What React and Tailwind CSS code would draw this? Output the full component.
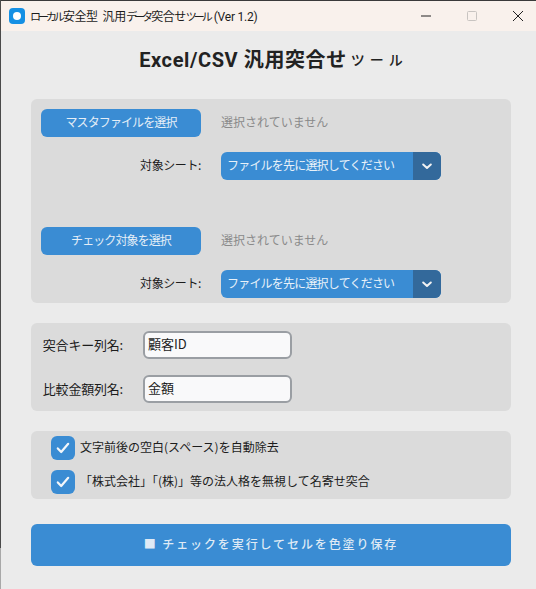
const cjk = "font-['Noto_Sans_CJK_JP','Noto_Sans',sans-serif]";

function Chevron() {
  return (
    <svg width="10" height="7" viewBox="0 0 10 7" fill="none">
      <path d="M1.2 1.5 5 5 8.8 1.5" stroke="#f2f2f2" strokeWidth="2" strokeLinecap="round" strokeLinejoin="round" />
    </svg>
  );
}

function FileRow({ label }) {
  return (
    <div className="flex flex-col gap-[15px]">
      <div className="flex items-center">
        <button className="w-40 h-7 pb-[2px] rounded-md bg-[#3a8cd3] text-xs tracking-[-0.9px] text-[#e4eef7] flex items-center justify-center">{label}</button>
        <span className="ml-5 pb-[2px] text-xs text-[#8a8a8a]">選択されていません</span>
      </div>
      <div className="flex items-center">
        <span className="w-40 pb-[2px] text-right text-xs tracking-[-0.4px] text-[#1c1c1c]">対象シート:</span>
        <div className="ml-5 w-[220px] h-7 rounded-md bg-[#3a8cd3] flex overflow-hidden">
          <span className="flex-1 pl-[6px] text-xs tracking-[-0.8px] leading-[26px] text-[#e8f1f9] whitespace-nowrap">ファイルを先に選択してください</span>
          <span className="w-7 h-7 bg-[#33699b] flex items-center justify-center"><Chevron /></span>
        </div>
      </div>
    </div>
  );
}

function Field({ label, value }) {
  return (
    <div className="flex items-center">
      <span className="w-[92px] pb-px text-right text-[13px] tracking-[-0.2px] text-[#1c1c1c] whitespace-nowrap">{label}</span>
      <div className="ml-5 w-[149px] h-7 rounded-md border-2 border-[#9a9ea3] bg-[#f9f9fa] px-[3px] text-[13px] leading-[22px] text-[#1c1c1c]">{value}</div>
    </div>
  );
}

function Check({ label }) {
  return (
    <div className="flex items-center">
      <span className="w-6 h-6 rounded-md bg-[#3a8cd3] flex items-center justify-center">
        <svg width="14" height="12" viewBox="0 0 14 12" fill="none">
          <path d="M1.8 6.4 5.2 10 12.2 1.8" stroke="#f2f6fa" strokeWidth="2.2" strokeLinecap="round" strokeLinejoin="round" />
        </svg>
      </span>
      <span className="ml-[5px] pb-[2px] text-xs text-[#1c1c1c] whitespace-nowrap">{label}</span>
    </div>
  );
}

export default function App() {
  return (
    <div className={`relative w-[536px] h-[589px] overflow-hidden bg-[#ebebeb] ${cjk}`}>
      <div className="absolute left-0 top-0 w-px h-[548px] bg-[#4a4a4a]" />
      <div className="absolute left-0 top-[548px] w-px h-[41px] bg-[#a8a8a8]" />
      <div className="h-[31px] bg-[#f9f1ec] flex items-center border-t border-[#3a3a3a]">
        <span className="ml-[9px] w-4 h-4 rounded bg-[#1590e4] flex items-center justify-center">
          <span className="w-2 h-2 rounded-sm bg-white" />
        </span>
        <span className="ml-[5px] text-xs text-[#1c1c1c] whitespace-nowrap">
          <span className="text-[11px] tracking-[-3px]">ローカル</span>
          <span className="ml-[1px] tracking-[-0.5px]">安全型</span>
          <span className="ml-[5px] tracking-[-0.2px]">汎用</span>
          <span className="text-[11px] tracking-[-3px]">データ</span>
          <span className="ml-[1px] tracking-[-0.5px]">突合せ</span>
          <span className="text-[11px] tracking-[-3px]">ツール</span>
          <span className="ml-[4px] tracking-[-0.2px] font-['Roboto',sans-serif]">(Ver 1.2)</span>
        </span>
        <div className="ml-auto flex items-center">
          <svg width="46" height="30" viewBox="0 0 46 30" fill="none"><path d="M18 15h10" stroke="#222" strokeWidth="1" /></svg>
          <svg width="46" height="30" viewBox="0 0 46 30" fill="none"><rect x="18.5" y="10.5" width="9" height="9" rx="1" stroke="#c8c4c1" /></svg>
          <svg width="41" height="30" viewBox="0 0 41 30" fill="none"><path d="M18 10l10 10M28 10 18 20" stroke="#222" strokeWidth="1" /></svg>
        </div>
      </div>
      <div className="ml-[31px] w-[480px]">
        <h1 className="h-[68px] pb-[10px] flex items-center justify-center text-[20px] font-bold tracking-[0.6px] text-[#222] font-['Roboto','Noto_Sans_CJK_JP',sans-serif] whitespace-nowrap">
          Excel/CSV 汎用突合せ<span className="ml-[4px] text-[14px] font-medium tracking-[5px] -mr-[5px]">ツール</span>
        </h1>
        <div className="rounded-md bg-[#dbdbdb] pt-[10px] pb-[5px] px-[10px] flex flex-col gap-[47px]">
          <FileRow label="マスタファイルを選択" />
          <FileRow label="チェック対象を選択" />
        </div>
        <div className="mt-5 h-[88px] rounded-md bg-[#dbdbdb] pt-[8px] flex flex-col gap-4">
          <Field label="突合キー列名:" value="顧客ID" />
          <Field label="比較金額列名:" value="金額" />
        </div>
        <div className="mt-5 h-[68px] rounded-md bg-[#dbdbdb] pl-5 pt-[5px] flex flex-col gap-[10px]">
          <Check label="文字前後の空白(スペース)を自動除去" />
          <Check label="「株式会社」「(株)」等の法人格を無視して名寄せ突合" />
        </div>
        <button className="mt-[25px] w-full h-[42px] pb-[2px] rounded-md bg-[#3a8cd3] text-xs font-medium tracking-[1.9px] text-[#dfeaf5] flex items-center justify-center">
          ■ チェックを実行してセルを色塗り保存
        </button>
      </div>
    </div>
  );
}
